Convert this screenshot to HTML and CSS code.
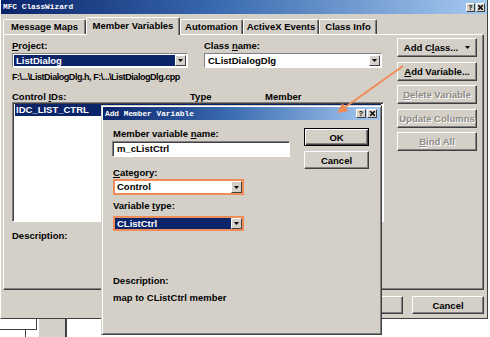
FILE: index.html
```html
<!DOCTYPE html>
<html>
<head>
<meta charset="utf-8">
<link rel="stylesheet" href="styles.css">
</head>
<body>
<div class="desk">
  <div class="main">
    <div class="titlebar">
      <span class="title">MFC ClassWizard</span>
      <span class="tbtns"><span class="tb">?</span><span class="tb"><svg width="5" height="5" viewBox="0 0 5 5"><path d="M0 0L5 5M5 0L0 5" stroke="#000" stroke-width="1.4"/></svg></span></span>
    </div>
    <div class="tabs">
      <div class="tab w1">Message Maps</div>
      <div class="tab sel w2">Member Variables</div>
      <div class="tab w3">Automation</div>
      <div class="tab w4">ActiveX Events</div>
      <div class="tab w5">Class Info</div>
    </div>
    <div class="panel">
      <div class="pleft">
        <div class="row1">
          <div class="fld proj">
            <div class="lbl"><u>P</u>roject:</div>
            <div class="combo sunk"><span class="ctext hl">ListDialog</span><span class="cbtn"><svg width="5" height="3" viewBox="0 0 5 3"><path d="M0 0H5L2.5 3Z"/></svg></span></div>
          </div>
          <div class="fld cls">
            <div class="lbl">Class <u>n</u>ame:</div>
            <div class="combo sunk"><span class="ctext">CListDialogDlg</span><span class="cbtn"><svg width="5" height="3" viewBox="0 0 5 3"><path d="M0 0H5L2.5 3Z"/></svg></span></div>
          </div>
        </div>
        <div class="path">F:\...\ListDialogDlg.h, F:\...\ListDialogDlg.cpp</div>
        <div class="hdr"><span>Control <u>I</u>Ds:</span><span>Type</span><span>Member</span></div>
        <div class="list"><div class="lrow">IDC_LIST_CTRL</div></div>
        <div class="desc">Description:</div>
      </div>
      <div class="pright">
        <div class="btn">Add C<u>l</u>ass... <svg class="dd" width="5" height="3" viewBox="0 0 5 3"><path d="M0 0H5L2.5 3Z"/></svg></div>
        <div class="btn"><u>A</u>dd Variable...</div>
        <div class="btn dis"><u>D</u>elete Variable</div>
        <div class="btn dis">Update Columns</div>
        <div class="btn dis"><u>B</u>ind All</div>
      </div>
    </div>
    <div class="foot">
      <div class="btn fbtn">OK</div>
      <div class="btn fbtn">Cancel</div>
    </div>
  </div>

  <div class="dlg">
    <div class="titlebar dtitle">
      <span class="title">Add Member Variable</span>
      <span class="tbtns"><span class="tb dtb">?</span><span class="tb dtb"><svg width="5" height="5" viewBox="0 0 5 5"><path d="M0 0L5 5M5 0L0 5" stroke="#000" stroke-width="1.4"/></svg></span></span>
    </div>
    <div class="dbody">
      <div class="dleft">
        <div class="lbl dl">Member variable <u>n</u>ame:</div>
        <div class="edit">m_cListCtrl</div>
        <div class="lbl dl cat"><u>C</u>ategory:</div>
        <div class="mark m1"><div class="combo"><span class="ctext">Control</span><span class="cbtn"><svg width="5" height="3" viewBox="0 0 5 3"><path d="M0 0H5L2.5 3Z"/></svg></span></div></div>
        <div class="lbl dl vt">Variable <u>t</u>ype:</div>
        <div class="mark m2"><div class="combo"><span class="ctext hl">CListCtrl</span><span class="cbtn"><svg width="5" height="3" viewBox="0 0 5 3"><path d="M0 0H5L2.5 3Z"/></svg></span></div></div>
        <div class="lbl dl ddesc">Description:</div>
        <div class="lbl dl dmap">map to CListCtrl member</div>
      </div>
      <div class="dright">
        <div class="btn okb"><span>OK</span></div>
        <div class="btn cb">Cancel</div>
      </div>
    </div>
  </div>

  <svg class="arrow" width="490" height="337" viewBox="0 0 490 337">
    <line x1="403" y1="66" x2="343" y2="108.8" stroke="#f08c58" stroke-width="2"/>
    <polygon points="337,113 348.2,111.2 342.4,103" fill="#f08c58"/>
  </svg>

  <div class="bg1"></div>
  <div class="bg2"></div>
  <div class="bg3"></div>
</div>
</body>
</html>
```

FILE: styles.css
```css
* { box-sizing: border-box; margin: 0; padding: 0; }
html, body { margin: 0; background: #fff; }
body {
  width: 490px; height: 337px; overflow: hidden;
  font-family: "Liberation Sans", Arial, sans-serif;
  font-weight: bold; font-size: 9.5px; color: #000;
}
u { text-decoration: underline; text-underline-offset: 1px; }
.desk { position: relative; width: 490px; height: 337px; }

.main {
  width: 488px; height: 319px;
  background: #d4d0c8;
  border-left: 1px solid #fff;
  border-right: 1px solid #404040;
  border-bottom: 1px solid #404040;
  display: flex; flex-direction: column;
}

.titlebar {
  height: 14px;
  background: linear-gradient(90deg, #0a246a 0%, #3a6ab0 45%, #a6caf0 100%);
  display: flex; align-items: center; justify-content: space-between;
  padding: 0 2px 0 2px;
}
.title {
  font-family: "Liberation Mono", monospace; font-weight: bold;
  font-size: 7.8px; color: #fff; letter-spacing: 0;
}
.tbtns { display: flex; gap: 1px; }
.tb {
  width: 9px; height: 9px; background: #d4d0c8;
  border-top: 1px solid #fff; border-left: 1px solid #fff;
  border-right: 1px solid #404040; border-bottom: 1px solid #404040;
  font-size: 7px; line-height: 7px; text-align: center;
  display: flex; align-items: center; justify-content: center;
}

.tabs {
  height: 20px; display: flex; align-items: flex-end;
  padding-left: 2px;
}
.tab {
  height: 15px;
  border-top: 1px solid #fff; border-left: 1px solid #fff;
  border-right: 1px solid #404040;
  box-shadow: inset -1px 0 #808080;
  border-radius: 2px 2px 0 0;
  text-align: center; line-height: 13px;
}
.tab.sel {
  height: 18px; margin-bottom: -1px; position: relative; z-index: 1;
  background: #d4d0c8; line-height: 15px;
}
.w1 { width: 83px; }
.w2 { width: 94px; }
.w3 { width: 63px; }
.w4 { width: 76px; }
.w5 { width: 58px; }

.panel {
  margin-left: 2px; width: 481px; height: 256px;
  border-top: 1px solid #fff; border-left: 1px solid #fff;
  border-right: 1px solid #404040; border-bottom: 1px solid #404040;
  box-shadow: inset -1px -1px #808080;
  display: flex;
}
.pleft { width: 380px; padding: 5px 0 0 8px; }
.lbl { line-height: 11px; height: 11px; white-space: nowrap; }
.row1 { display: flex; }
.fld .lbl { margin-bottom: 2px; }
.proj { width: 176px; }
.cls { width: 178px; margin-left: 16px; }

.combo {
  height: 15px; display: flex; background: #fff;
}
.sunk {
  border-top: 1px solid #808080; border-left: 1px solid #808080;
  border-right: 1px solid #fff; border-bottom: 1px solid #fff;
  padding: 1px;
}
.ctext {
  flex: 1; line-height: 11px; padding-left: 2px; white-space: nowrap;
}
.ctext.hl { background: #0a246a; color: #fff; }
.cbtn {
  width: 11px; background: #d4d0c8;
  border-top: 1px solid #fff; border-left: 1px solid #fff;
  border-right: 1px solid #404040; border-bottom: 1px solid #404040;
  display: flex; align-items: center; justify-content: center;
}

.path {
  margin-top: 4px; line-height: 11px; height: 11px; white-space: nowrap;
  letter-spacing: -0.45px; font-size: 9px;
}
.hdr {
  margin-top: 8px; line-height: 11px; height: 11px;
  display: grid; grid-template-columns: 178px 75px auto;
}
.list {
  width: 372px; height: 120px; background: #fff;
  border-top: 1px solid #808080; border-left: 1px solid #808080;
  border-right: 1px solid #fff; border-bottom: 1px solid #fff;
  box-shadow: inset 1px 1px #404040;
  padding: 1px 2px 0 2px;
}
.lrow {
  background: #0a246a; color: #fff; height: 12px; line-height: 12px;
  padding-left: 1px;
}
.desc { margin-top: 8px; line-height: 11px; }

.pright {
  width: 80px; margin-left: 13px; padding-top: 3px;
  display: flex; flex-direction: column; gap: 4.5px;
}
.btn {
  height: 19px; background: #d4d0c8;
  border-top: 1px solid #fff; border-left: 1px solid #fff;
  border-right: 1px solid #404040; border-bottom: 1px solid #404040;
  box-shadow: inset -1px -1px #808080;
  display: flex; align-items: center; justify-content: center;
  white-space: nowrap;
}
.btn .dd { margin-left: 7px; }
.btn.dis { color: #8c8a84; text-shadow: 1px 1px #fff; }

.foot {
  margin-top: 6px; display: flex; justify-content: flex-end; gap: 9px;
  padding-right: 3px;
}
.fbtn { width: 72px; height: 18px; }

.dlg {
  position: absolute; left: 101px; top: 105px; width: 281px; height: 230px;
  background: #d4d0c8;
  border-top: 1px solid #d4d0c8; border-left: 1px solid #d4d0c8;
  border-right: 1px solid #404040; border-bottom: 1px solid #404040;
  box-shadow: inset 1px 1px #fff, inset -1px -1px #808080;
  padding: 1px;
}
.dtitle { height: 13px; padding: 0 3px 0 2px; }
.dtb { width: 10px; height: 9px; }
.dbody { display: flex; }
.dleft { width: 190px; padding: 8px 0 0 9px; }
.dl { margin-left: 1px; }
.edit {
  margin-top: 2px; width: 178px; height: 16px; background: #fff;
  border-top: 1px solid #808080; border-left: 1px solid #808080;
  border-right: 1px solid #fff; border-bottom: 1px solid #fff;
  box-shadow: inset 1px 1px #404040;
  line-height: 13px; padding-left: 4px; font-weight: bold;
}
.cat { margin-top: 10px; }
.mark {
  margin-left: 1px; width: 131px;
  border: 2px solid #ef8c58; background: #fff;
}
.m1 { margin-top: 1px; height: 16px; }
.m2 { margin-top: 5px; height: 15px; }
.mark .combo { height: 100%; }
.vt { margin-top: 5px; }
.ddesc { margin-top: 44px; }
.dmap { margin-top: 6px; }

.dright {
  margin-left: 11px; width: 65px; padding-top: 8px;
  display: flex; flex-direction: column; gap: 5px;
}
.dright .btn { height: 18px; }
.okb { border: 1px solid #000; box-shadow: inset 1px 1px #fff, inset -1px -1px #404040, inset -2px -2px #808080; }

.arrow { position: absolute; left: 0; top: 0; pointer-events: none; }

.bg1 {
  position: absolute; left: 0; top: 319px; width: 37px; height: 11px;
  background: #fff; border-right: 1px solid #404040; border-bottom: 1px solid #404040;
}
.bg2 {
  position: absolute; left: 25px; top: 330px; width: 1px; height: 7px; background: #404040;
}
.bg3 {
  position: absolute; left: 39px; top: 319px; width: 28px; height: 18px;
  background: #d4d0c8; border-right: 2px solid #404040;
}
```
